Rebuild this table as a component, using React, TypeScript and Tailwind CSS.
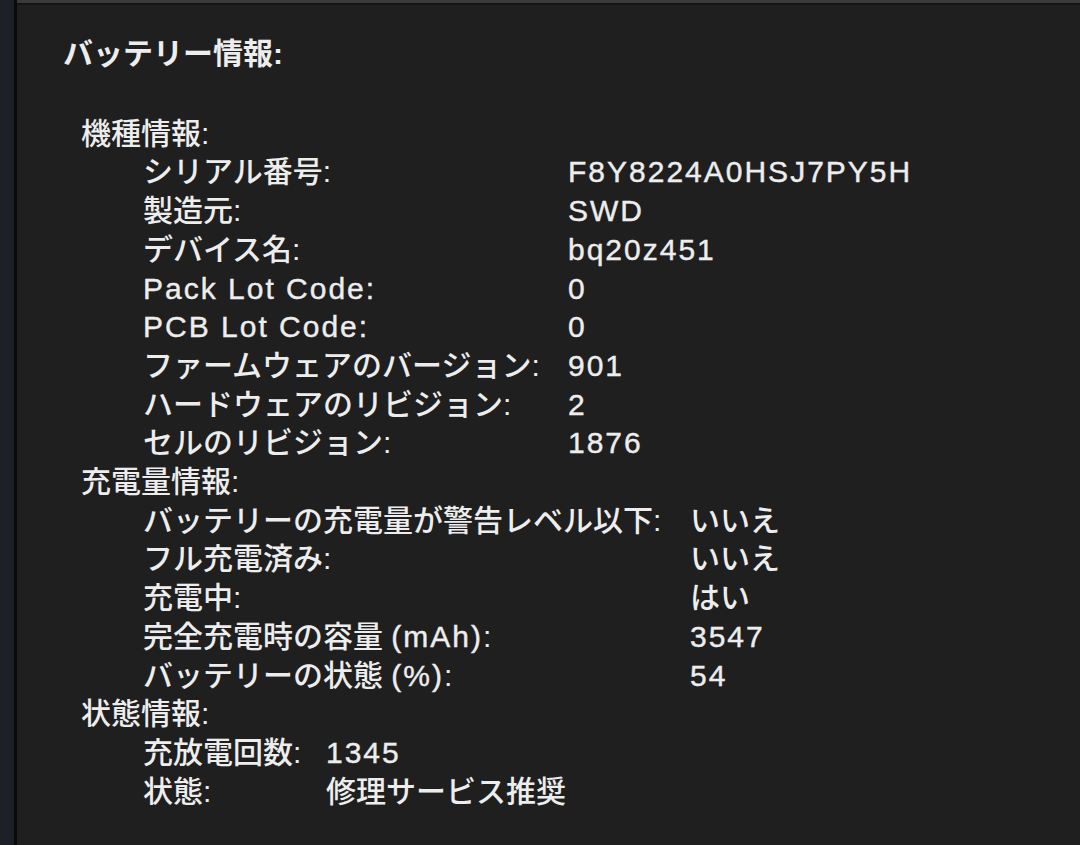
import { FC, ReactNode } from "react";

type Row = { label: ReactNode; value: ReactNode };

const Lat: FC<{ children: ReactNode }> = ({ children }) => (
    <span className="tracking-[2px] [-webkit-text-stroke:0.4px_#ededed]">{children}</span>
);

const modelRows: Row[] = [
    { label: "シリアル番号:", value: <Lat>F8Y8224A0HSJ7PY5H</Lat> },
    { label: "製造元:", value: <Lat>SWD</Lat> },
    { label: "デバイス名:", value: <Lat>bq20z451</Lat> },
    { label: <Lat>Pack Lot Code:</Lat>, value: <Lat>0</Lat> },
    { label: <Lat>PCB Lot Code:</Lat>, value: <Lat>0</Lat> },
    { label: "ファームウェアのバージョン:", value: <Lat>901</Lat> },
    { label: "ハードウェアのリビジョン:", value: <Lat>2</Lat> },
    { label: "セルのリビジョン:", value: <Lat>1876</Lat> },
];

const chargeRows: Row[] = [
    { label: "バッテリーの充電量が警告レベル以下:", value: "いいえ" },
    { label: "フル充電済み:", value: "いいえ" },
    { label: "充電中:", value: "はい" },
    { label: <>完全充電時の容量 <Lat>(mAh)</Lat>:</>, value: <Lat>3547</Lat> },
    { label: <>バッテリーの状態 <Lat>(%)</Lat>:</>, value: <Lat>54</Lat> },
];

const stateRows: Row[] = [
    { label: "充放電回数:", value: <Lat>1345</Lat> },
    { label: "状態:", value: "修理サービス推奨" },
];

const Section: FC<{ title: string; rows: Row[]; labelWidth: string }> = ({ title, rows, labelWidth }) => {
    return (
        <div className="pl-[18px]">
            <p>{title}</p>
            <div className={`grid pl-[62px] ${labelWidth}`}>
                {rows.map((r, i) => (
                    <div key={i} className="contents">
                        <span className="whitespace-nowrap">{r.label}</span>
                        <span className="whitespace-nowrap">{r.value}</span>
                    </div>
                ))}
            </div>
        </div>
    );
};

export default function App() {
    return (
        <div
            className="flex w-[1080px] h-[845px] overflow-hidden bg-[#1f1f1f] text-[#ededed] text-[30px] leading-[38.7px] font-medium"
            style={{ fontFamily: '"Liberation Sans", "Noto Sans CJK JP", sans-serif' }}
        >
            <div className="w-[14px] shrink-0 bg-[#1d2127]" />
            <div className="w-[3px] shrink-0 bg-[#0b0b0c]" />
            <div className="flex-1 flex flex-col">
                <div className="h-[3px] bg-[#3a3a3a]" />
                <div className="h-[2px] bg-[#141414]" />
                <div className="pt-[30px] pl-[46px]">
                    <h1 className="font-bold mb-[41px]">バッテリー情報:</h1>
                    <Section title="機種情報:" rows={modelRows} labelWidth="grid-cols-[425px_1fr]" />
                    <Section title="充電量情報:" rows={chargeRows} labelWidth="grid-cols-[547px_1fr]" />
                    <Section title="状態情報:" rows={stateRows} labelWidth="grid-cols-[183px_1fr]" />
                </div>
            </div>
        </div>
    );
}
